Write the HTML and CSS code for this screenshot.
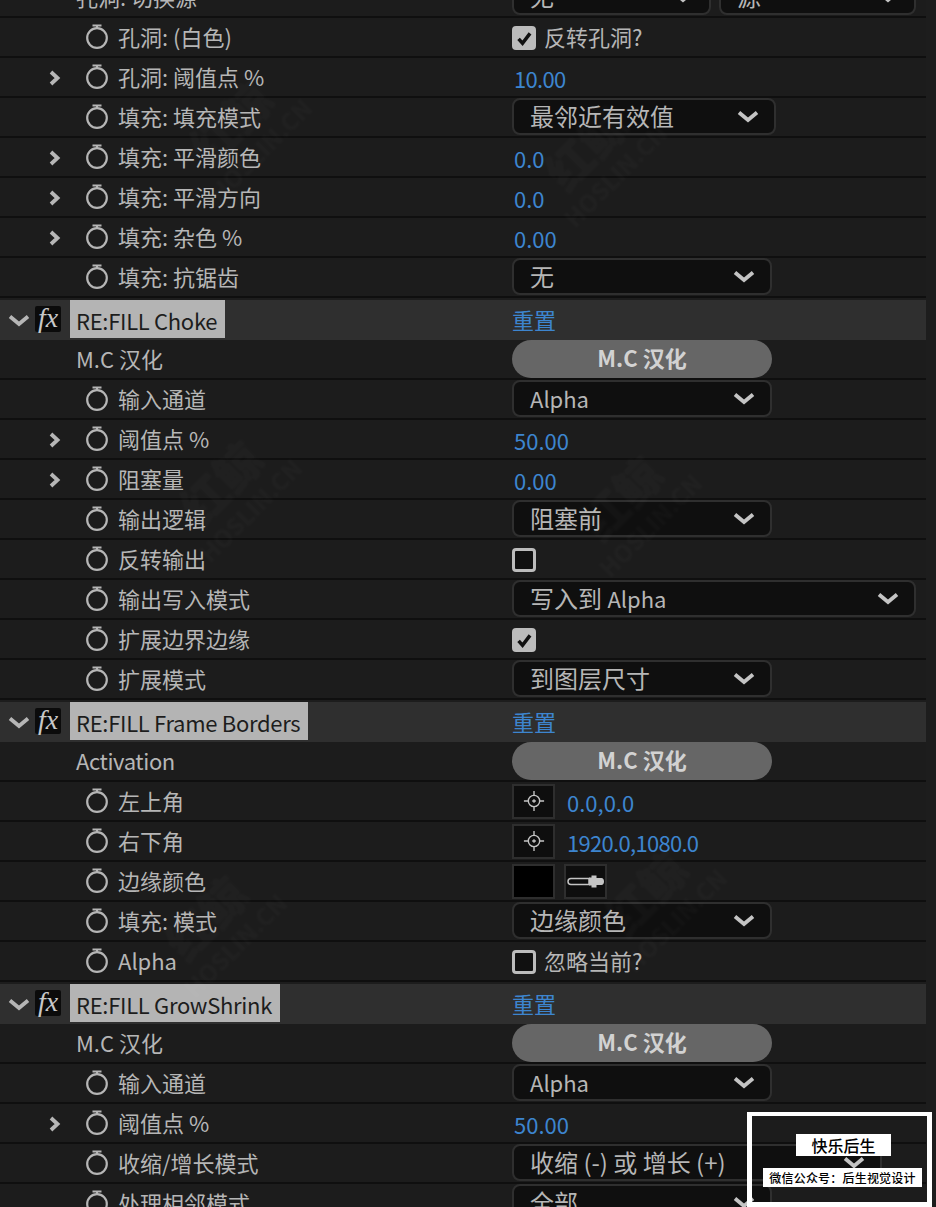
FILE: index.html
```html
<!DOCTYPE html>
<html lang="zh-CN">
<head>
    <meta charset="UTF-8">
    <title>RE:FILL 效果控件</title>
    <link rel="stylesheet" href="styles.css">
</head>
<body>

    <!-- shared icons -->
    <svg class="defs" width="0" height="0">
        <symbol id="watch" viewBox="0 0 24 28">
            <path d="M7.500 2.500h9M12 2.500v3.500" fill="none" stroke="currentColor" stroke-width="2"/>
            <circle cx="12" cy="15" r="9.800" fill="none" stroke="currentColor" stroke-width="2.200"/>
        </symbol>
        <symbol id="twirl-r" viewBox="0 0 12 16">
            <path d="M2 2l6.500 6L2 14" fill="none" stroke="currentColor" stroke-width="3.800"/>
        </symbol>
        <symbol id="twirl-d" viewBox="0 0 22 13">
            <path d="M2 2.500l9 7.500 9-7.500" fill="none" stroke="currentColor" stroke-width="3.800"/>
        </symbol>
        <symbol id="check" viewBox="0 0 24 24">
            <path d="M4.500 12.500l5 5.500 9.500-12.500" fill="none" stroke="currentColor" stroke-width="4.400"/>
        </symbol>
        <symbol id="target" viewBox="0 0 24 24">
            <circle cx="12" cy="12" r="6.200" fill="none" stroke="currentColor" stroke-width="1.500"/>
            <path d="M1 12h5M18 12h5M12 1v5M12 18v5M10 12h4M12 10v4" fill="none" stroke="currentColor" stroke-width="1.500"/>
        </symbol>
    </svg>

    <div class="panel">
        <div class="row">
            <span class="label plain">孔洞: 切换源</span>
            <div class="value">
                <div class="select s-half"><span>无</span><svg class="arrow"><use href="#twirl-d"/></svg></div>
                <div class="select s-half2"><span>源</span><svg class="arrow"><use href="#twirl-d"/></svg></div>
            </div>
        </div>
        <div class="row">
            <span class="twirl"></span><svg class="watch"><use href="#watch"/></svg><span class="label">孔洞: (白色)</span>
            <div class="value"><span class="box on"><svg><use href="#check"/></svg></span><span class="box-text">反转孔洞?</span></div>
        </div>
        <div class="row">
            <span class="twirl"><svg><use href="#twirl-r"/></svg></span><svg class="watch"><use href="#watch"/></svg><span class="label">孔洞: 阈值点 %</span>
            <div class="value"><span class="num tight">10.00</span></div>
        </div>
        <div class="row">
            <span class="twirl"></span><svg class="watch"><use href="#watch"/></svg><span class="label">填充: 填充模式</span>
            <div class="value"><div class="select s-264"><span>最邻近有效值</span><svg class="arrow"><use href="#twirl-d"/></svg></div></div>
        </div>
        <div class="row">
            <span class="twirl"><svg><use href="#twirl-r"/></svg></span><svg class="watch"><use href="#watch"/></svg><span class="label">填充: 平滑颜色</span>
            <div class="value"><span class="num">0.0</span></div>
        </div>
        <div class="row">
            <span class="twirl"><svg><use href="#twirl-r"/></svg></span><svg class="watch"><use href="#watch"/></svg><span class="label">填充: 平滑方向</span>
            <div class="value"><span class="num">0.0</span></div>
        </div>
        <div class="row">
            <span class="twirl"><svg><use href="#twirl-r"/></svg></span><svg class="watch"><use href="#watch"/></svg><span class="label">填充: 杂色 %</span>
            <div class="value"><span class="num">0.00</span></div>
        </div>
        <div class="row">
            <span class="twirl"></span><svg class="watch"><use href="#watch"/></svg><span class="label">填充: 抗锯齿</span>
            <div class="value"><div class="select s-260"><span>无</span><svg class="arrow"><use href="#twirl-d"/></svg></div></div>
        </div>

        <!-- RE:FILL Choke -->
        <div class="head">
            <svg class="head-arrow"><use href="#twirl-d"/></svg><span class="fx">fx</span><span class="head-name">RE:FILL Choke</span>
            <div class="value"><span class="reset">重置</span></div>
        </div>
        <div class="row">
            <span class="label plain">M.C 汉化</span>
            <div class="value"><div class="pill">M.C 汉化</div></div>
        </div>
        <div class="row">
            <span class="twirl"></span><svg class="watch"><use href="#watch"/></svg><span class="label">输入通道</span>
            <div class="value"><div class="select s-260"><span class="lat">Alpha</span><svg class="arrow"><use href="#twirl-d"/></svg></div></div>
        </div>
        <div class="row">
            <span class="twirl"><svg><use href="#twirl-r"/></svg></span><svg class="watch"><use href="#watch"/></svg><span class="label">阈值点 %</span>
            <div class="value"><span class="num">50.00</span></div>
        </div>
        <div class="row">
            <span class="twirl"><svg><use href="#twirl-r"/></svg></span><svg class="watch"><use href="#watch"/></svg><span class="label">阻塞量</span>
            <div class="value"><span class="num">0.00</span></div>
        </div>
        <div class="row">
            <span class="twirl"></span><svg class="watch"><use href="#watch"/></svg><span class="label">输出逻辑</span>
            <div class="value"><div class="select s-260"><span>阻塞前</span><svg class="arrow"><use href="#twirl-d"/></svg></div></div>
        </div>
        <div class="row">
            <span class="twirl"></span><svg class="watch"><use href="#watch"/></svg><span class="label">反转输出</span>
            <div class="value"><span class="box"></span></div>
        </div>
        <div class="row">
            <span class="twirl"></span><svg class="watch"><use href="#watch"/></svg><span class="label">输出写入模式</span>
            <div class="value"><div class="select s-full"><span>写入到 <span class="lat">Alpha</span></span><svg class="arrow"><use href="#twirl-d"/></svg></div></div>
        </div>
        <div class="row">
            <span class="twirl"></span><svg class="watch"><use href="#watch"/></svg><span class="label">扩展边界边缘</span>
            <div class="value"><span class="box on"><svg><use href="#check"/></svg></span></div>
        </div>
        <div class="row">
            <span class="twirl"></span><svg class="watch"><use href="#watch"/></svg><span class="label">扩展模式</span>
            <div class="value"><div class="select s-260"><span>到图层尺寸</span><svg class="arrow"><use href="#twirl-d"/></svg></div></div>
        </div>

        <!-- RE:FILL Frame Borders -->
        <div class="head">
            <svg class="head-arrow"><use href="#twirl-d"/></svg><span class="fx">fx</span><span class="head-name">RE:FILL Frame Borders</span>
            <div class="value"><span class="reset">重置</span></div>
        </div>
        <div class="row">
            <span class="label plain tight">Activation</span>
            <div class="value"><div class="pill">M.C 汉化</div></div>
        </div>
        <div class="row">
            <span class="twirl"></span><svg class="watch"><use href="#watch"/></svg><span class="label">左上角</span>
            <div class="value"><span class="tool"><svg class="target"><use href="#target"/></svg></span><span class="num point">0.0,0.0</span></div>
        </div>
        <div class="row">
            <span class="twirl"></span><svg class="watch"><use href="#watch"/></svg><span class="label">右下角</span>
            <div class="value"><span class="tool"><svg class="target"><use href="#target"/></svg></span><span class="num point tight">1920.0,1080.0</span></div>
        </div>
        <div class="row">
            <span class="twirl"></span><svg class="watch"><use href="#watch"/></svg><span class="label">边缘颜色</span>
            <div class="value">
                <span class="tool swatch"></span>
                <span class="tool">
                    <svg class="dropper" viewBox="0 0 37 13">
                        <path d="M1 6.500c0-1.800 1.500-3 3-3h18v6H4c-1.500 0-3-1.200-3-3z" fill="none" stroke="currentColor" stroke-width="1.500"/>
                        <path d="M22 2.500h2.500V.5h5v2.500h5c1.500 0 2.500 1.500 2.500 3.500s-1 3.500-2.500 3.500h-5v2.500h-5v-2h-2.500z" fill="currentColor"/>
                    </svg>
                </span>
            </div>
        </div>
        <div class="row">
            <span class="twirl"></span><svg class="watch"><use href="#watch"/></svg><span class="label">填充: 模式</span>
            <div class="value"><div class="select s-260"><span>边缘颜色</span><svg class="arrow"><use href="#twirl-d"/></svg></div></div>
        </div>
        <div class="row">
            <span class="twirl"></span><svg class="watch"><use href="#watch"/></svg><span class="label">Alpha</span>
            <div class="value"><span class="box"></span><span class="box-text">忽略当前?</span></div>
        </div>

        <!-- RE:FILL GrowShrink -->
        <div class="head">
            <svg class="head-arrow"><use href="#twirl-d"/></svg><span class="fx">fx</span><span class="head-name">RE:FILL GrowShrink</span>
            <div class="value"><span class="reset">重置</span></div>
        </div>
        <div class="row">
            <span class="label plain">M.C 汉化</span>
            <div class="value"><div class="pill">M.C 汉化</div></div>
        </div>
        <div class="row">
            <span class="twirl"></span><svg class="watch"><use href="#watch"/></svg><span class="label">输入通道</span>
            <div class="value"><div class="select s-260"><span class="lat">Alpha</span><svg class="arrow"><use href="#twirl-d"/></svg></div></div>
        </div>
        <div class="row">
            <span class="twirl"><svg><use href="#twirl-r"/></svg></span><svg class="watch"><use href="#watch"/></svg><span class="label">阈值点 %</span>
            <div class="value"><span class="num">50.00</span></div>
        </div>
        <div class="row">
            <span class="twirl"></span><svg class="watch"><use href="#watch"/></svg><span class="label">收缩/增长模式</span>
            <div class="value"><div class="select s-370"><span>收缩 (-) 或 增长 (+)</span><svg class="arrow"><use href="#twirl-d"/></svg></div></div>
        </div>
        <div class="row">
            <span class="twirl"></span><svg class="watch"><use href="#watch"/></svg><span class="label">处理相邻模式</span>
            <div class="value"><div class="select s-260"><span>全部</span><svg class="arrow"><use href="#twirl-d"/></svg></div></div>
        </div>
    </div>

    <!-- watermark -->
    <div class="mark m1"><b>红鲸</b>HOSLIN.CN</div>
    <div class="mark m2"><b>红鲸</b>HOSLIN.CN</div>
    <div class="mark m3"><b>红鲸</b>HOSLIN.CN</div>
    <div class="mark m4"><b>红鲸</b>HOSLIN.CN</div>
    <div class="mark m5"><b>红鲸</b>HOSLIN.CN</div>
    <div class="mark m6"><b>红鲸</b>HOSLIN.CN</div>

    <!-- account badge, bottom right -->
    <div class="badge">
        <div class="badge-title">快乐后生</div>
        <div class="badge-sub">微信公众号：后生视觉设计</div>
    </div>

</body>
</html>
```

FILE: styles.css
```css
html, body {
    margin: 0;
    padding: 0;
    height: 1207px;
    overflow: hidden;
}

body {
    position: relative;
    background-color: #1d1d1d;
    color: #b6b6b6;
    font-family: "Noto Sans CJK SC", Lato, sans-serif;
    font-size: 22px;
}

.defs {
    position: absolute;
}

/* first row is cut off by the top of the window */
.panel {
    width: 926px;
    margin-top: -22px;
}

.row {
    display: flex;
    align-items: center;
    height: 40px;
    box-sizing: border-box;
    border-bottom: 2px solid #0f0f0f;
    background-color: #1c1c1c;
}

.row .twirl {
    flex: none;
    width: 12px;
    height: 16px;
    margin-left: 49px;
    margin-top: 2px;
    color: #b6b6b6;
}

.twirl svg {
    display: block;
    width: 12px;
    height: 16px;
}

.watch {
    flex: none;
    width: 24px;
    height: 28px;
    margin-left: 24px;
    color: #b6b6b6;
}

.label {
    margin-left: 9px;
    margin-top: -2px;
    white-space: nowrap;
}

.label.plain {
    margin-left: 76px;
}

.label.tight {
    letter-spacing: -0.4px;
}

/* right column always starts at the same x */
.value {
    position: absolute;
    left: 512px;
    display: flex;
    align-items: center;
    height: 38px;
}

.num {
    margin-left: 2px;
    margin-top: 2px;
    color: #3d85cf;
}

.num.point {
    margin-left: 12px;
}

.num.tight {
    letter-spacing: -0.7px;
}

.reset {
    margin-top: -2px;
    color: #3d85cf;
}

.select {
    display: flex;
    align-items: center;
    justify-content: space-between;
    box-sizing: border-box;
    height: 37px;
    margin-top: -1px;
    padding: 0 15px 0 16px;
    background-color: #0f0f0f;
    border: 2px solid #2f2f2f;
    border-radius: 8px;
    font-size: 24px;
    line-height: 30px;
    white-space: nowrap;
}

.select > span {
    margin-top: -2px;
}

.lat {
    font-size: 22px;
}

.s-260 { width: 260px; }
.s-264 { width: 264px; }
.s-370 { width: 370px; }
.s-full { width: 404px; }
.s-half { width: 199px; }
.s-half2 { width: 197px; margin-left: 8px; }

.arrow {
    flex: none;
    width: 22px;
    height: 13px;
    color: #c4c4c4;
}

.box {
    display: flex;
    align-items: center;
    justify-content: center;
    box-sizing: border-box;
    width: 24px;
    height: 24px;
    margin-top: 2px;
    background-color: #101010;
    border: 3px solid #bcbcbc;
    border-radius: 4px;
}

.box.on {
    background-color: #bcbcbc;
    color: #111;
}

.box svg {
    flex: none;
    width: 19px;
    height: 19px;
}

.box-text {
    margin-left: 8px;
    margin-top: -2px;
}

.pill {
    width: 260px;
    height: 38px;
    line-height: 35px;
    text-align: center;
    background-color: #666;
    border-radius: 19px;
    color: #d2d2d2;
    font-weight: 700;
}

.tool {
    display: flex;
    align-items: center;
    justify-content: center;
    box-sizing: border-box;
    width: 43px;
    height: 35px;
    background-color: #0e0e0e;
    border: 2px solid #2e2e2e;
    color: #c4c4c4;
}

.swatch {
    background-color: #000;
}

.swatch + .tool {
    margin-left: 9px;
}

.target {
    width: 22px;
    height: 22px;
}

.dropper {
    width: 37px;
    height: 13px;
}

/* effect header */
.head {
    display: flex;
    align-items: center;
    height: 40px;
    margin-top: 2px;
    background-color: #2f2f2f;
}

.head-arrow {
    flex: none;
    width: 22px;
    height: 13px;
    margin-left: 8px;
    color: #b6b6b6;
}

.fx {
    flex: none;
    width: 26px;
    height: 26px;
    margin-left: 5px;
    margin-top: -3px;
    background-color: #0b0b0b;
    border-radius: 2px;
    color: #c8c8c8;
    font-family: "Liberation Serif", serif;
    font-style: italic;
    font-size: 28px;
    line-height: 24px;
    text-align: center;
}

.head-name {
    align-self: flex-start;
    height: 38px;
    margin-left: 9px;
    padding: 0 8px 0 6px;
    background-color: #b4b4b4;
    color: #1d1d1d;
    letter-spacing: -0.3px;
    line-height: 41px;
    white-space: nowrap;
}

/* faint diagonal watermark */
.mark {
    position: absolute;
    width: 130px;
    transform: rotate(-45deg);
    color: rgba(255, 255, 255, 0.02);
    font-weight: 700;
    font-size: 24px;
    line-height: 30px;
    text-align: center;
    white-space: nowrap;
    filter: blur(1px);
    pointer-events: none;
}

.mark b {
    display: block;
    font-size: 46px;
    line-height: 54px;
}

.m1 { left: 530px; top: 115px; }
.m2 { left: 175px; top: 90px; }
.m3 { left: 565px; top: 465px; }
.m4 { left: 165px; top: 450px; }
.m5 { left: 150px; top: 885px; }
.m6 { left: 590px; top: 860px; }

/* account badge */
.badge {
    position: absolute;
    left: 747px;
    top: 1112px;
    width: 185px;
    height: 95px;
    box-sizing: border-box;
    border: 5px solid #fff;
    border-top-width: 4px;
}

.badge-title {
    position: absolute;
    left: 44px;
    top: 18px;
    width: 95px;
    height: 22px;
    background-color: #fff;
    color: #000;
    font-size: 16px;
    font-weight: 500;
    line-height: 22px;
    text-align: center;
}

.badge-sub {
    position: absolute;
    left: 11px;
    top: 52px;
    width: 159px;
    height: 19px;
    background-color: #fff;
    color: #000;
    font-size: 12px;
    font-weight: 500;
    line-height: 19px;
    text-align: center;
    letter-spacing: 0.2px;
    white-space: nowrap;
}
```
